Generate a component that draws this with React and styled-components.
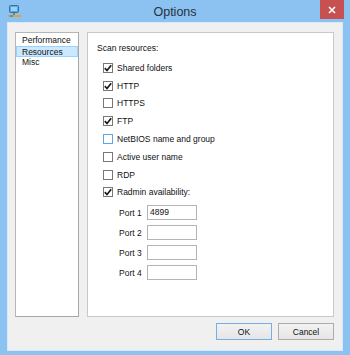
import React from "react";
import styled, { createGlobalStyle } from "styled-components";

const Global = createGlobalStyle`
  html, body { margin: 0; padding: 0; width: 350px; height: 355px; overflow: hidden; }
  body { font-family: "Liberation Sans", Arial, sans-serif; }
  * { box-sizing: border-box; }
`;

const FONT = `font-family: "Liberation Sans", Arial, sans-serif; font-size: 8.5px; color: #111;`;

const Window = styled.div`
  width: 350px;
  height: 355px;
  background: #8cc2f2;
  display: flex;
  flex-direction: column;
`;

const TitleBar = styled.div`
  height: 22px;
  display: grid;
  grid-template-columns: 1fr auto 1fr;
  align-items: start;
`;

const IconSlot = styled.div`
  padding: 5px 0 0 8px;
  display: flex;
`;

const Title = styled.div`
  font-family: "Liberation Sans", Arial, sans-serif;
  font-size: 12.5px;
  color: #26303c;
  line-height: 14px;
  padding-top: 5px;
`;

const CloseSlot = styled.div`
  display: flex;
  justify-content: flex-end;
  padding-right: 6px;
`;

const CloseButton = styled.div`
  width: 24px;
  height: 19px;
  background: #c75050;
  display: flex;
  align-items: center;
  justify-content: center;
`;

const Client = styled.div`
  flex: 1;
  margin: 0 7px 4px 7px;
  border: 1px solid #d8e9f9;
  background: #f0f0f0;
  padding: 9px 8px 10px 7px;
  display: flex;
  flex-direction: column;
`;

const Body = styled.div`
  flex: 1;
  display: flex;
  gap: 8px;
`;

const NavList = styled.div`
  width: 64px;
  background: #fff;
  border: 1px solid #a8a8a8;
  border-top-color: #b6b6b6;
  border-left-color: #b6b6b6;
  padding: 2px 0;
  display: flex;
  flex-direction: column;
`;

const NavItem = styled.div`
  ${FONT}
  height: 11px;
  line-height: 10px;
  padding-left: ${(p) => (p.$selected ? 5 : 6)}px;
  background: ${(p) => (p.$selected ? "#cce8ff" : "transparent")};
  border: ${(p) => (p.$selected ? "1px solid #99d1ff" : "none")};
  white-space: nowrap;
`;

const Panel = styled.div`
  flex: 1;
  background: #fff;
  border: 1px solid #c9c9c9;
  padding: 9px 9px;
  display: flex;
  flex-direction: column;
`;

const Heading = styled.div`
  ${FONT}
  line-height: 12px;
  margin-bottom: 5px;
`;

const CheckRow = styled.label`
  ${FONT}
  height: 17.8px;
  display: flex;
  align-items: center;
  gap: 4px;
  margin-left: 6px;
  white-space: nowrap;
`;

const Box = styled.span`
  width: 10px;
  height: 10px;
  border: 1px solid ${(p) => (p.$focus ? "#5ea6e6" : "#777")};
  background: #fff;
  display: flex;
  align-items: center;
  justify-content: center;
  flex: none;
`;

const Ports = styled.div`
  display: flex;
  flex-direction: column;
  gap: 5px;
  margin-top: 4px;
  margin-left: 22px;
`;

const PortRow = styled.div`
  ${FONT}
  display: flex;
  align-items: center;
  gap: 5px;
  height: 15px;
`;

const PortLabel = styled.span`
  width: 23px;
  white-space: nowrap;
`;

const PortInput = styled.div`
  ${FONT}
  width: 50px;
  height: 15px;
  border: 1px solid #b4b4b4;
  background: #fff;
  padding-left: 2px;
  line-height: 13px;
`;

const ButtonRow = styled.div`
  display: flex;
  justify-content: flex-end;
  gap: 6px;
  margin-top: 6px;
`;

const Button = styled.div`
  ${FONT}
  width: 56px;
  height: 17px;
  border: 1px solid ${(p) => (p.$default ? "#76afe6" : "#acacac")};
  background: linear-gradient(#f2f2f2, #e6e6e6);
  display: flex;
  align-items: center;
  justify-content: center;
`;

const Check = () => (
  <svg width="8" height="8" viewBox="0 0 8 8">
    <path d="M0.8 4.2 L3 6.5 L7.2 1.2" fill="none" stroke="#1a1a1a" strokeWidth="1.7" />
  </svg>
);

const AppIcon = () => (
  <svg width="13" height="13" viewBox="0 0 13 13">
    <rect x="1.5" y="0.5" width="9" height="7" rx="1" fill="#5aa9e6" stroke="#3d6f9c" />
    <rect x="3" y="2" width="6" height="4" fill="#9bd3f7" />
    <rect x="5" y="8" width="2" height="2" fill="#6f7f8f" />
    <rect x="0" y="10" width="13" height="2" fill="#e2a626" />
    <rect x="2" y="10" width="3" height="2" fill="#3a9ad9" />
  </svg>
);

const CloseGlyph = () => (
  <svg width="8" height="8" viewBox="0 0 8 8">
    <path d="M1 1 L7 7 M7 1 L1 7" stroke="#fff" strokeWidth="1.6" />
  </svg>
);

const options = [
  { label: "Shared folders", checked: true },
  { label: "HTTP", checked: true },
  { label: "HTTPS", checked: false },
  { label: "FTP", checked: true },
  { label: "NetBIOS name and group", checked: false, focus: true },
  { label: "Active user name", checked: false },
  { label: "RDP", checked: false },
  { label: "Radmin availability:", checked: true },
];

const ports = [
  { label: "Port 1", value: "4899" },
  { label: "Port 2", value: "" },
  { label: "Port 3", value: "" },
  { label: "Port 4", value: "" },
];

export default function App() {
  return (
    <>
      <Global />
      <Window>
        <TitleBar>
          <IconSlot>
            <AppIcon />
          </IconSlot>
          <Title>Options</Title>
          <CloseSlot>
            <CloseButton>
              <CloseGlyph />
            </CloseButton>
          </CloseSlot>
        </TitleBar>
        <Client>
          <Body>
            <NavList>
              <NavItem>Performance</NavItem>
              <NavItem $selected>Resources</NavItem>
              <NavItem>Misc</NavItem>
            </NavList>
            <Panel>
              <Heading>Scan resources:</Heading>
              {options.map((o) => (
                <CheckRow key={o.label}>
                  <Box $focus={o.focus}>{o.checked && <Check />}</Box>
                  {o.label}
                </CheckRow>
              ))}
              <Ports>
                {ports.map((p) => (
                  <PortRow key={p.label}>
                    <PortLabel>{p.label}</PortLabel>
                    <PortInput>{p.value}</PortInput>
                  </PortRow>
                ))}
              </Ports>
            </Panel>
          </Body>
          <ButtonRow>
            <Button $default>OK</Button>
            <Button>Cancel</Button>
          </ButtonRow>
        </Client>
      </Window>
    </>
  );
}
